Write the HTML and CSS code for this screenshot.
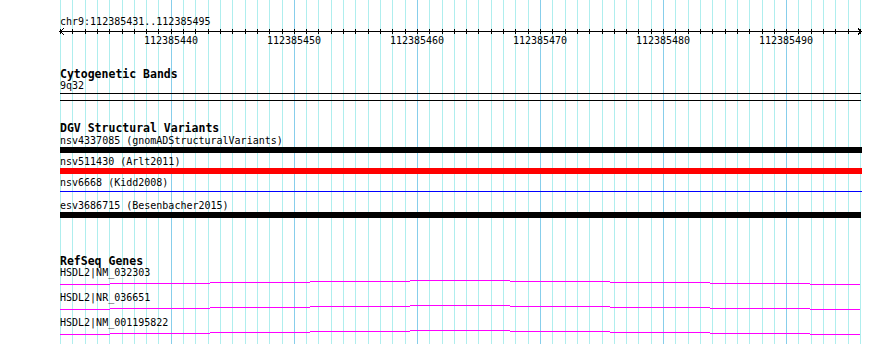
FILE: index.html
```html
<!DOCTYPE html>
<html>
<head>
<title>chr9:112385431..112385495</title>
<link rel="stylesheet" href="styles.css">
</head>
<body>
<div class="view">
  <div class="grid" id="grid"></div>
  <div class="tracks">
    <div class="loc">chr9:112385431..112385495</div>
    <div class="ruler" id="ruler">
      <svg class="axis" width="806" height="8">
        <path id="ticks" d="" stroke="#000" fill="none" shape-rendering="crispEdges"/>
      </svg>
    </div>
    <div class="track cyto">
      <div class="track-label">Cytogenetic Bands</div>
      <div class="feature-name">9q32</div>
      <div class="band"></div>
      <div class="separator"></div>
    </div>
    <div class="track dgv">
      <div class="track-label">DGV Structural Variants</div>
      <div class="variant">
        <div class="feature-name">nsv4337085 (gnomADStructuralVariants)</div>
        <div class="bar black"></div>
      </div>
      <div class="variant">
        <div class="feature-name">nsv511430 (Arlt2011)</div>
        <div class="bar red"></div>
      </div>
      <div class="variant">
        <div class="feature-name">nsv6668 (Kidd2008)</div>
        <div class="bar thin"><div class="bar-line"></div></div>
      </div>
      <div class="variant">
        <div class="feature-name">esv3686715 (Besenbacher2015)</div>
        <div class="bar black short"></div>
      </div>
    </div>
    <div class="track refseq">
      <div class="track-label">RefSeq Genes</div>
      <div class="gene">
        <div class="feature-name">HSDL2|NM_032303</div>
        <svg class="intron" width="802" height="13"><path d="M0 5h50v1H0zM50 4h100v1H50zM150 3h100v1H150zM250 2h100v1H250zM350 1h100v1H350zM450 2h100v1H450zM550 3h100v1H550zM650 4h100v1H650zM750 5h50v1H750z"/></svg>
      </div>
      <div class="gene">
        <div class="feature-name">HSDL2|NR_036651</div>
        <svg class="intron" width="802" height="13"><path d="M0 5h50v1H0zM50 4h100v1H50zM150 3h100v1H150zM250 2h100v1H250zM350 1h100v1H350zM450 2h100v1H450zM550 3h100v1H550zM650 4h100v1H650zM750 5h50v1H750z"/></svg>
      </div>
      <div class="gene">
        <div class="feature-name">HSDL2|NM_001195822</div>
        <svg class="intron" width="802" height="13"><path d="M0 5h50v1H0zM50 4h100v1H50zM150 3h100v1H150zM250 2h100v1H250zM350 1h100v1H350zM450 2h100v1H450zM550 3h100v1H550zM650 4h100v1H650zM750 5h50v1H750z"/></svg>
      </div>
    </div>
  </div>
</div>
<script>
let start = 112385431;
let bases = 65;
let left = 60;
let width = 800;
let grid = document.getElementById('grid');
let ruler = document.getElementById('ruler');
let d = 'M2 3.5H803M6 0.5L2 3.5L6 6.5M800 0.5L803 3.5L800 6.5';
for (let i = 0; i <= bases; i++) 
{
  let x = Math.round(left + i * width / bases);
  let pos = start + i - 1;
  let line = document.createElement('div');
  line.className = 'gridline';
  if (pos % 10 === 9) 
  {
    line.className += ' major';
    let label = document.createElement('div');
    label.className = 'tick-label';
    label.textContent = pos + 1;
    label.style.left = (x - left) + 'px';
    ruler.appendChild(label);
  }
  line.style.left = x + 'px';
  grid.appendChild(line);
  d += 'M' + (x - 58 + 0.5) + ' 1V6';
}
document.getElementById('ticks').setAttribute('d', d);
</script>
</body>
</html>
```

FILE: styles.css
```css
body {
  margin: 0;
  background: #fff;
  color: #000;
  font-family: "DejaVu Sans Mono", monospace;
  font-size: 10px;
}
.view {
  position: relative;
  width: 890px;
  height: 344px;
  overflow: hidden;
}
.grid {
  position: absolute;
  top: 0;
  left: 0;
  right: 0;
  bottom: 0;
}
.gridline {
  position: absolute;
  top: 0;
  bottom: 0;
  width: 1px;
  background: #afeeee;
}
.gridline.major {
  background: #87ceeb;
}
.tracks {
  position: relative;
  padding: 16px 0 0 60px;
}
.loc {
  line-height: 12px;
  white-space: nowrap;
}
.ruler {
  position: relative;
  height: 19px;
}
.axis {
  display: block;
  margin-left: -2px;
}
.tick-label {
  position: absolute;
  top: 7px;
  line-height: 12px;
  transform: translateX(-50%);
}
.track-label {
  font-size: 11.5px;
  font-weight: bold;
  line-height: 11px;
  white-space: nowrap;
}
.feature-name {
  white-space: nowrap;
}
.cyto {
  margin-top: 22px;
}
.cyto .feature-name {
  line-height: 12px;
}
.band {
  width: 801px;
  height: 1px;
  margin-top: 1px;
  background: #000;
}
.separator {
  width: 801px;
  height: 1px;
  margin-top: 6px;
  background: #000;
}
.dgv {
  margin-top: 22px;
}
.variant {
  padding-bottom: 2px;
}
.variant .feature-name {
  line-height: 13px;
}
.bar {
  width: 802px;
  height: 6px;
}
.bar.black {
  background: #000;
}
.bar.red {
  background: #f00;
}
.bar.short {
  width: 801px;
}
.bar-line {
  height: 1px;
  margin-top: 2px;
  background: #00f;
}
.refseq {
  margin-top: 36px;
}
.gene .feature-name {
  line-height: 12px;
}
.intron {
  display: block;
  fill: #f0f;
}
```
